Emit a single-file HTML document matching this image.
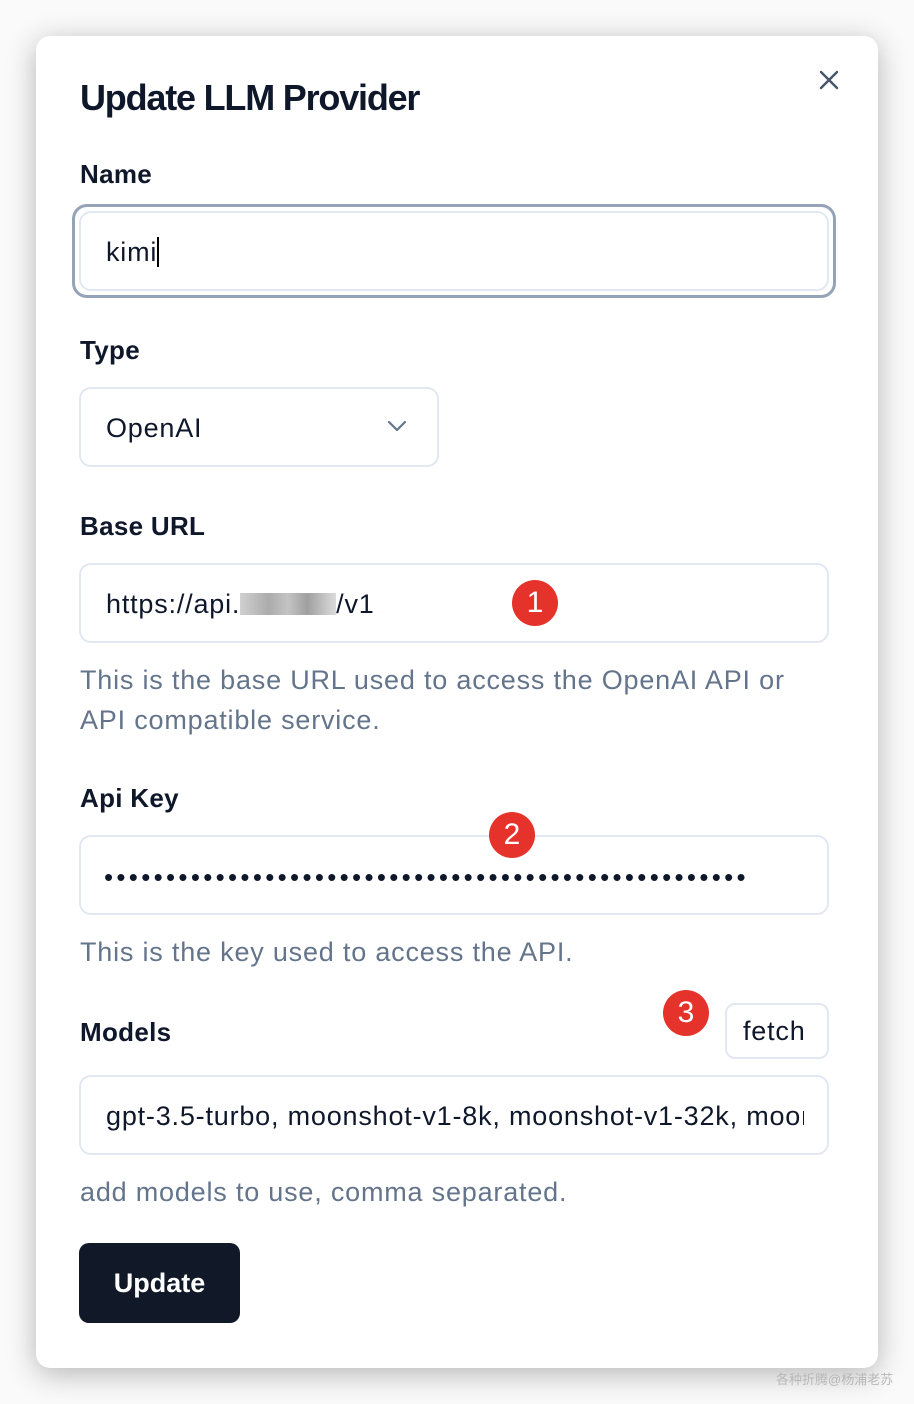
<!DOCTYPE html>
<html><head><meta charset="utf-8"><style>
*{box-sizing:border-box;margin:0;padding:0}
body{width:914px;height:1404px;background:#fafafa;font-family:"Liberation Sans","Noto Sans CJK SC",sans-serif;color:#0f172a;position:relative;overflow:hidden}
.card{position:absolute;left:36px;top:36px;width:842px;height:1332px;background:#fff;border-radius:14px;box-shadow:0 6px 30px rgba(0,0,0,.28)}
.a{position:absolute;white-space:nowrap}
.lbl{font-size:26px;font-weight:bold;line-height:30px;color:#0f172a;letter-spacing:0.3px}
.inp{position:absolute;border:2px solid #e2e8f0;border-radius:12px;background:#fff;overflow:hidden}
.t{font-size:27px;line-height:30px;color:#0f172a;letter-spacing:0.8px}
.help{font-size:27px;line-height:30px;color:#64748b;letter-spacing:0.8px}
.badge{position:absolute;width:46px;height:46px;border-radius:50%;background:#e5322a;color:#fff;font-size:30px;line-height:46px;text-align:center}
</style></head><body>
<div class="card"></div>
<div class="a" style="left:80px;top:77px;font-size:36px;font-weight:bold;letter-spacing:-1.2px;line-height:42px;color:#0f172a">Update LLM Provider</div>
<svg class="a" style="left:818px;top:69px" width="22" height="22" viewBox="0 0 22 22"><path d="M3 3L19 19M19 3L3 19" stroke="#475569" stroke-width="2.4" stroke-linecap="round"/></svg>

<div class="a lbl" style="left:80px;top:159px">Name</div>
<div class="a" style="left:72px;top:204px;width:764px;height:94px;border:3px solid #94a3b8;border-radius:15px"></div>
<div class="inp" style="left:79px;top:211px;width:750px;height:80px"></div>
<div class="a t" style="left:106px;top:237px">kimi<span style="display:inline-block;width:2px;height:30px;background:#000;vertical-align:-6px"></span></div>

<div class="a lbl" style="left:80px;top:335px">Type</div>
<div class="inp" style="left:79px;top:387px;width:360px;height:80px"></div>
<div class="a t" style="left:106px;top:413px">OpenAI</div>
<svg class="a" style="left:387px;top:419px" width="20" height="14" viewBox="0 0 20 14"><path d="M2 3L10 11L18 3" fill="none" stroke="#64748b" stroke-width="2.2" stroke-linecap="round" stroke-linejoin="round"/></svg>

<div class="a lbl" style="left:80px;top:511px">Base URL</div>
<div class="inp" style="left:79px;top:563px;width:750px;height:80px"></div>
<div class="a t" style="left:106px;top:589px">https://api.<span style="display:inline-block;width:96px;height:22px;background:linear-gradient(90deg,#bbb,#888 30%,#aaa 50%,#777 70%,#ccc);opacity:.7;vertical-align:-2px"></span>/v1</div>
<div class="badge" style="left:512px;top:580px">1</div>
<div class="a help" style="left:80px;top:665px">This is the base URL used to access the OpenAI API or</div>
<div class="a help" style="left:80px;top:705px">API compatible service.</div>

<div class="a lbl" style="left:80px;top:783px">Api Key</div>
<div class="inp" style="left:79px;top:835px;width:750px;height:80px"></div>
<div class="a" style="left:104px;top:862px;font-size:26px;letter-spacing:3.3px;color:#0f172a">••••••••••••••••••••••••••••••••••••••••••••••••••••</div>
<div class="badge" style="left:489px;top:812px">2</div>
<div class="a help" style="left:80px;top:937px">This is the key used to access the API.</div>

<div class="a lbl" style="left:80px;top:1017px">Models</div>
<div class="inp" style="left:725px;top:1003px;width:104px;height:56px;border-radius:10px"></div>
<div class="a t" style="left:743px;top:1016px">fetch</div>
<div class="badge" style="left:663px;top:990px">3</div>
<div class="inp" style="left:79px;top:1075px;width:750px;height:80px"></div>
<div class="a t" style="left:106px;top:1101px;width:698px;overflow:hidden">gpt-3.5-turbo, moonshot-v1-8k, moonshot-v1-32k, moonshot-v1-128k</div>
<div class="a help" style="left:80px;top:1177px">add models to use, comma separated.</div>

<div class="a" style="left:79px;top:1243px;width:161px;height:80px;background:#111827;border-radius:10px;color:#fff;font-size:27px;font-weight:bold;line-height:80px;text-align:center">Update</div>

<div class="a" style="left:776px;top:1369px;font-size:13px;color:#b8b8b8">各种折腾@杨浦老苏</div>
</body></html>
